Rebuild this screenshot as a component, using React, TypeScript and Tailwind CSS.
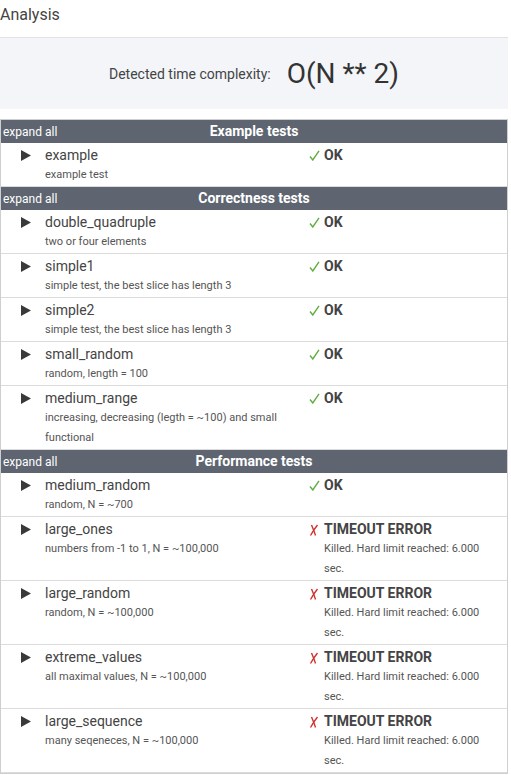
import React from "react";

type Test = {
	name: string;
	desc: string;
	ok: boolean;
};

type Group = {
	title: string;
	tests: Test[];
};

const groups: Group[] = [
	{
		title: "Example tests",
		tests: [{ name: "example", desc: "example test", ok: true }],
	},
	{
		title: "Correctness tests",
		tests: [
			{ name: "double_quadruple", desc: "two or four elements", ok: true },
			{ name: "simple1", desc: "simple test, the best slice has length 3", ok: true },
			{ name: "simple2", desc: "simple test, the best slice has length 3", ok: true },
			{ name: "small_random", desc: "random, length = 100", ok: true },
			{
				name: "medium_range",
				desc: "increasing, decreasing (legth = ~100) and small functional",
				ok: true,
			},
		],
	},
	{
		title: "Performance tests",
		tests: [
			{ name: "medium_random", desc: "random, N = ~700", ok: true },
			{ name: "large_ones", desc: "numbers from -1 to 1, N = ~100,000", ok: false },
			{ name: "large_random", desc: "random, N = ~100,000", ok: false },
			{ name: "extreme_values", desc: "all maximal values, N = ~100,000", ok: false },
			{ name: "large_sequence", desc: "many seqeneces, N = ~100,000", ok: false },
		],
	},
];

const Triangle = () => (
	<svg width="10" height="11" viewBox="0 0 10 11" className="mt-[5px]">
		<polygon points="0,0 10,5.5 0,11" fill="#3a3a3a" />
	</svg>
);

const Check = () => (
	<svg width="11" height="11" viewBox="0 0 11 11" className="mt-[5px] ml-[1px]">
		<path d="M1 6.5 L3.8 10 L10 0.8" fill="none" stroke="#5fae3e" strokeWidth="1.4" />
	</svg>
);

const Cross = () => (
	<svg width="10" height="12" viewBox="0 0 10 12" className="mt-[5px] ml-[1px]">
		<path d="M2.5 1 C4 4.5 5.5 8 6.5 11.5" fill="none" stroke="#d0312d" strokeWidth="1.4" />
		<path d="M8.5 1 C6 4 3.5 8 1.5 11.5" fill="none" stroke="#d0312d" strokeWidth="1.4" />
	</svg>
);

const TestRow = ({ test }: { test: Test }) => (
	<div className="grid grid-cols-[44px_263px_1fr] border-b border-[#dcdcdc] pt-[2px] pb-[1px]">
		<div className="pl-[20px]">
			<Triangle />
		</div>
		<div className="pr-4">
			<div className="text-[14px] leading-[20px] text-[#444]">{test.name}</div>
			<div className="text-[11px] leading-[20px] text-[#555]">{test.desc}</div>
		</div>
		<div className="flex">
			<div className="w-[16px]">{test.ok ? <Check /> : <Cross />}</div>
			<div className="w-[170px]">
				<div className="text-[14px] leading-[20px] font-bold text-[#444]">
					{test.ok ? "OK" : "TIMEOUT ERROR"}
				</div>
				{!test.ok && (
					<div className="text-[11px] leading-[20px] text-[#555]">
						Killed. Hard limit reached: 6.000 sec.
					</div>
				)}
			</div>
		</div>
	</div>
);

export default function App() {
	return (
		<div className="w-[508px] bg-white font-['Roboto',sans-serif] text-[#444]">
			<div className="h-[38px] border-b border-[#e2e2e2] text-[16px] leading-[30px] text-[#444]">
				Analysis
			</div>
			<div className="h-[71px] bg-[#f3f5f9] flex items-center justify-center gap-4">
				<span className="text-[14px] text-[#444] mt-[1px]">Detected time complexity:</span>
				<span className="text-[28px] text-[#333]">O(N ** 2)</span>
			</div>
			<div className="mt-[10px] border border-[#cfcfcf]">
				{groups.map((group) => (
					<div key={group.title}>
						<div className="grid grid-cols-[1fr_auto_1fr] items-center h-[23px] bg-[#5e6570] text-white">
							<span className="text-[12px] pl-[2px]">expand all</span>
							<span className="text-[14px] font-bold">{group.title}</span>
							<span></span>
						</div>
						{group.tests.map((test) => (
							<TestRow key={test.name} test={test} />
						))}
					</div>
				))}
			</div>
		</div>
	);
}
